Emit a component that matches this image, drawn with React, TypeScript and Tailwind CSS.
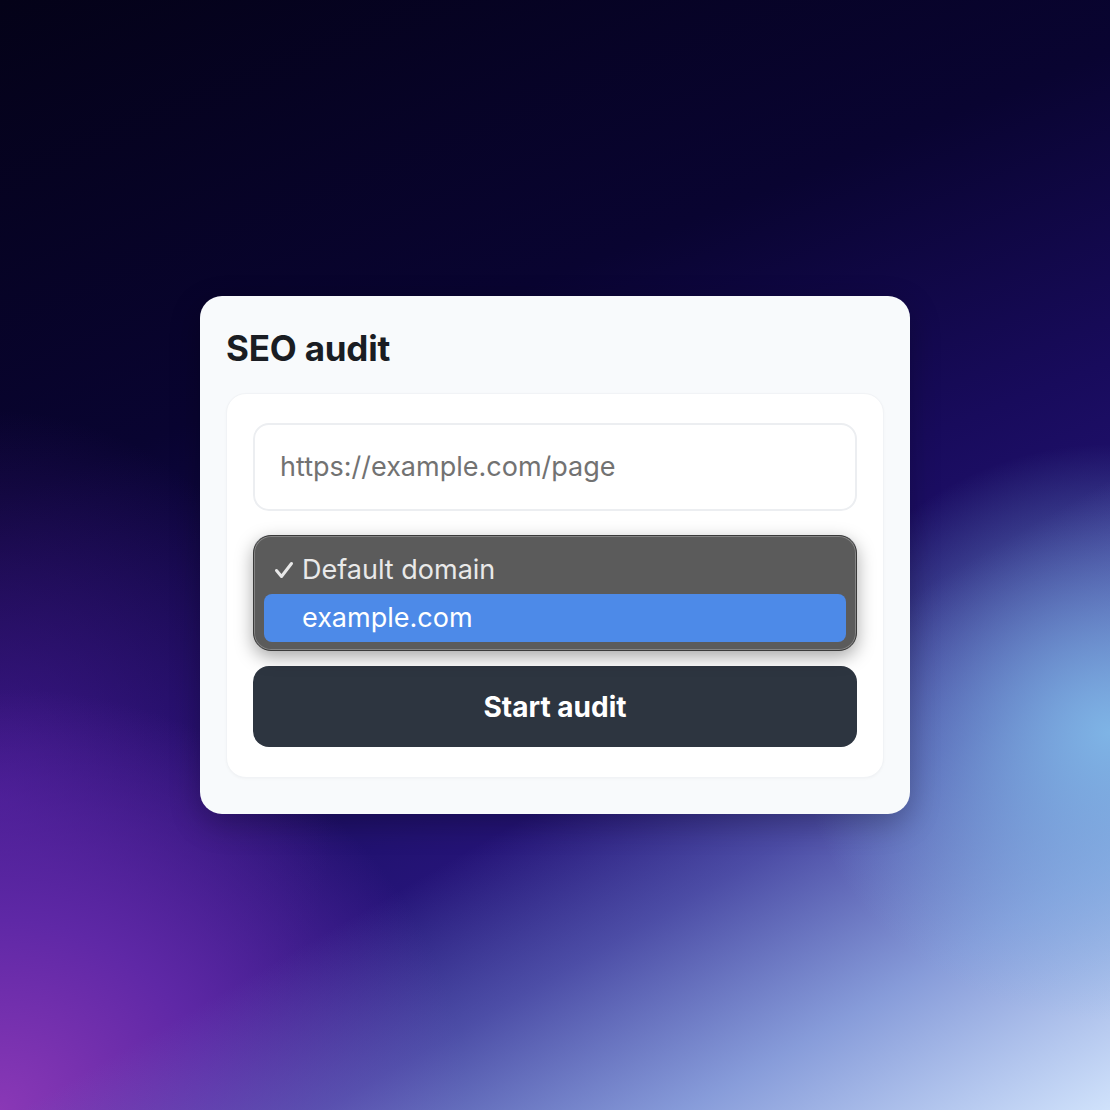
import { ChevronDown } from 'lucide-react';

export default function App() {
  return (
    <div className="relative w-[1110px] h-[1110px] overflow-hidden font-['Inter',sans-serif] bg-[radial-gradient(ellipse_28%_26%_at_100%_66%,rgba(128,184,232,0.95)_0%,transparent_100%),linear-gradient(150deg,transparent_64%,rgba(105,115,195,0.55)_74%,rgba(150,175,230,0.85)_86%,#d0e2fb_100%),radial-gradient(ellipse_42%_38%_at_0%_100%,#8a38b6_0%,#5f28a6_45%,transparent_100%),radial-gradient(ellipse_30%_35%_at_0%_72%,rgba(80,30,160,0.7)_0%,transparent_100%),linear-gradient(158deg,#040218_0%,#090431_32%,#180b5c_52%,#251478_68%,#2e2a8e_85%,#3d3aa0_100%)]">
      <div className="flex h-full items-center justify-center">
        {/* Card */}
        <div className="w-[710px] rounded-[22px] bg-[#f8fafc] px-[26px] pt-[29px] pb-[36px] shadow-[0_10px_30px_rgba(0,0,0,0.25)]">
          <h1 className="text-[35px] font-bold leading-[46px] tracking-[-0.2px] text-[#1a1d23]">SEO audit</h1>

          <div className="mt-[22px] rounded-[20px] border border-[#f1f3f6] bg-white px-[26px] pt-[29px] pb-[30px] shadow-[0_1px_3px_rgba(0,0,0,0.03)]">
            {/* URL input */}
            <div className="flex h-[88px] items-center rounded-[16px] border-2 border-[#eceef1] bg-white px-[25px]">
              <span className="text-[27px] text-[#727272]">https://example.com/page</span>
            </div>

            {/* Select with open native menu */}
            <div className="relative mt-[24px] h-[131px]">
              <div className="flex h-[112px] items-center justify-end rounded-[16px] border-2 border-[#eceef1] bg-white px-[25px]">
                <ChevronDown className="h-6 w-6 text-[#9ca3af]" />
              </div>
              <div className="absolute left-0 right-0 top-0 h-[116px] rounded-[18px] border border-[#3a3a3a] bg-[#5b5b5b] p-[2px] shadow-[0_6px_18px_rgba(0,0,0,0.35),inset_0_0_0_1px_rgba(255,255,255,0.25)]">
                <div className="flex h-[56px] items-center pl-[18px] pt-[8px]">
                  <svg viewBox="0 0 20 18" className="h-[18px] w-[20px]" fill="none" stroke="#e8e8e8" strokeWidth={3} strokeLinecap="round" strokeLinejoin="round">
                    <path d="M2.5 9.5 L7.5 15.5 L17.5 2.5" />
                  </svg>
                  <span className="ml-[8px] text-[27px] text-[#e9e9e9]">Default domain</span>
                </div>
                <div className="mx-[8px] flex h-[48px] items-center rounded-[8px] bg-[#4d8ae8] pl-[38px]">
                  <span className="text-[27px] text-white">example.com</span>
                </div>
              </div>
            </div>

            {/* Submit */}
            <button className="flex h-[81px] w-full items-center justify-center rounded-[16px] bg-[#2d3540] text-[28px] font-bold text-white">
              Start audit
            </button>
          </div>
        </div>
      </div>
    </div>
  );
}
